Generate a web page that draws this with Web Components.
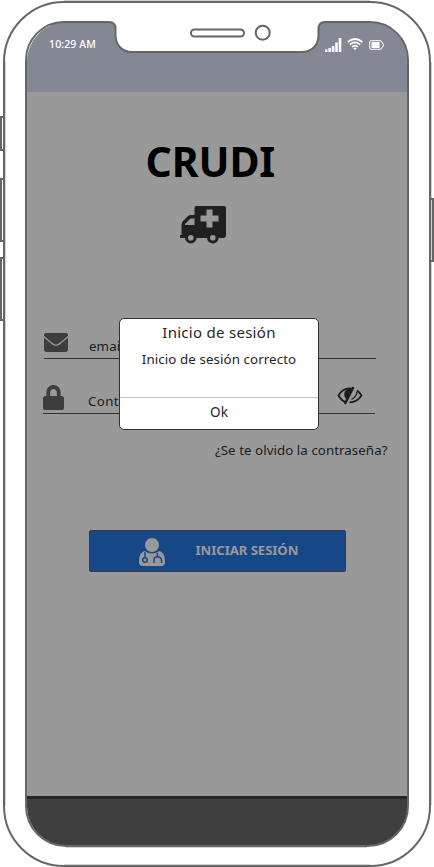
<!DOCTYPE html>
<html lang="es"><head><meta charset="utf-8"><title>CRUDI</title>
<style>html,body{margin:0;background:#fff}body{width:434px;height:867px;overflow:hidden;font-family:"Noto Sans","Open Sans",sans-serif;color:#1c1c1c}</style></head>
<body>
<phone-frame><login-screen></login-screen><message-dialog heading="Inicio de sesión" action="Ok">Inicio de sesión correcto</message-dialog></phone-frame>
<script>
const define=(name,html,setup)=>customElements.define(name,class extends HTMLElement{
 connectedCallback(){ if(this.shadowRoot)return; const t=document.createElement('template'); t.innerHTML=html;
  this.attachShadow({mode:'open'}).append(t.content.cloneNode(true)); if(setup)setup(this,this.shadowRoot);}
});
const icons={
 mail:['0 0 512 384','<path d="M0 52Q0 0 50 0H462Q512 0 512 52V60C440 118 380 164 320 208C270 243 242 243 192 208C132 164 72 118 0 60ZM0 96C65 148 120 190 174 230C232 270 280 270 338 230C392 190 447 148 512 96V334Q512 384 462 384H50Q0 384 0 334Z"/>'],
 lock:['0 0 448 512','<path fill-rule="evenodd" d="M400 224h-24v-72C376 68 308 0 224 0S72 68 72 152v72H48c-26 0-48 21-48 48v192c0 27 22 48 48 48h352c27 0 48-21 48-48V272c0-27-21-48-48-48zm-104 0H152v-72c0-40 32-72 72-72s72 32 72 72z"/>'],
 van:['0 0 46 38','<path fill-rule="evenodd" d="M16 0H44Q46 0 46 2V29Q46 32 43 32H38.5A6 6 0 0 0 27 32H16.5A6 6 0 0 0 5 32H0V29H1.5V19Q1.5 17 3 15L8 10Q9.500 9 11 9H14.500V2Q14.500 0 16 0ZM26.500 3.500V9.500H20.500V15.500H26.500V21.500H32.500V15.500H38.500V9.500H32.500V3.500ZM10.500 12.500L5 18V19H14.500V12.500Z"/><g fill="none" stroke="currentColor" stroke-width="3"><circle cx="10.800" cy="31.700" r="4.300"/><circle cx="32.800" cy="31.700" r="4.300"/></g>'],
 eye:['0 0 26 20','<g fill="none" stroke="currentColor" stroke-width="1.800"><path d="M14.500 2.500C8 1.500 4 5 1.500 9.500C3.500 13 5.500 15 8.500 16M20 4.500Q23 6.500 24.500 9.500C22 13.500 18 16.300 12.500 16.300"/><path d="M16.500 1L7.800 18" stroke-width="2.400"/><path d="M20 5.500Q20 10.500 14.500 13.500" stroke-width="1.300"/></g><path d="M14.500 3C9 2 6.500 6 7.500 10Q8 12.500 9.700 13.300L14 5Z"/>'],
 doctor:['0 0 26 28','<circle cx="13" cy="7" r="7"/><path d="M5.500 13Q13 18 20.500 13C24.500 14.500 26 18 26 24Q26 28 22 28H4Q0 28 0 24C0 18 1.500 14.500 5.500 13Z"/><g fill="none" stroke="#184788" stroke-width="1.500"><path d="M6 14V19.500M18.500 15V18.500M15 25V22Q15 18.800 18.500 18.800T22.500 22V25"/><circle cx="6" cy="22" r="2.300"/></g>'],
 signal:['0 0 17 14','<path d="M0 11.500h2.500v2.500H0zM3.400 10h2.500v4H3.400zM6.800 8h2.500v6H6.800zM10.200 4.500h2.500v9.500h-2.500zM13.700 0h2.600v14h-2.600z"/>'],
 wifi:['0 0 16 12','<g fill="none" stroke="currentColor" stroke-width="1.700"><path d="M.600 4.200Q8-2.200 15.400 4.200M2.900 6.600Q8 2.200 13.100 6.600M5.100 8.900Q8 6.200 10.900 8.900"/></g><path d="M6.200 10.200Q8 8.700 9.800 10.200L8 12Z"/>'],
 battery:['0 0 15 10','<path d="M2 .700H11Q12.700.700 12.800 2.300Q14.300 2.500 14.300 5T12.800 7.700Q12.700 9.300 11 9.300H2Q.700 9.300.700 8V2Q.700.700 2 .700Z" fill="none" stroke="currentColor"/><path d="M2.500 2h8v6h-8z"/>']
};
define('ui-icon','<style>:host{display:block;flex:none}svg{display:block;width:100%;height:100%;fill:currentColor}</style><svg preserveAspectRatio="none"></svg>',(h,r)=>{
 const s=r.querySelector('svg'),i=icons[h.getAttribute('name')];s.setAttribute('viewBox',i[0]);s.innerHTML=i[1];});
define('status-bar',`<style>:host{display:flex;box-sizing:border-box;height:70px;padding:12px 24px 0 22px;background:#838894;color:#fff;font:500 10.5px/20px "Noto Sans",sans-serif}
span{flex:1;letter-spacing:.12px}ui-icon{margin-top:4px}.s{width:17px;height:14px}.w{width:16px;height:12px;margin:4px 6px 0 5px}.b{width:15px;height:10px;margin-top:6px}</style>
<span>10:29 AM</span><ui-icon class="s" name="signal"></ui-icon><ui-icon class="w" name="wifi"></ui-icon><ui-icon class="b" name="battery"></ui-icon>`);
define('input-row',`<style>:host{display:flex;box-sizing:border-box;align-items:flex-start;border-bottom:1px solid #333;font-size:13.3px;line-height:20px}
.i{width:var(--iw);height:var(--ih);color:#3d3d3d}span{margin:var(--ty) 0 0 var(--gap);flex:1;letter-spacing:var(--ls,.1px)}</style><div class="i"></div><span><slot></slot></span><slot name="end"></slot>`,(h,r)=>{
 const n=document.createElement('ui-icon');n.className='i';n.setAttribute('name',h.getAttribute('icon'));r.querySelector('.i').replaceWith(n);});
define('action-button',`<style>:host{display:flex;box-sizing:border-box;width:257px;height:42px;border:1px solid #353c46;border-radius:2px;background:#184788;color:#999;padding:7px 0 0 49px;font-weight:700;font-size:13.2px;line-height:20px}
ui-icon{width:26px;height:28px}span{margin:2px 0 0 30.500px;white-space:nowrap;letter-spacing:-.08px}</style><ui-icon name="doctor"></ui-icon><span><slot></slot></span>`);
define('login-screen',`<style>:host{display:flex;flex-direction:column;height:100%;background:#999}
h1{margin:39px 0 0 118.500px;font-size:41px;line-height:60px;color:#000;letter-spacing:-.1px}
.van{width:46px;height:38px;margin:15px 0 0 153px;color:#202020}
.email{width:332px;height:26px;margin:89px 0 0 17px;--iw:24px;--ih:19px;--ty:3px;--gap:21px}
.pass{width:332px;height:29px;margin:26px 0 0 16px;--iw:21px;--ih:25px;--ty:6px;--gap:24px;--ls:.4px}
.eye{width:26px;height:20px;margin:1px 12px 0 0}
p{margin:26px 20.500px 0 0;text-align:right;font-size:13.3px;line-height:20px;letter-spacing:.06px;white-space:nowrap}
action-button{margin:70px 0 0 62px}footer{margin-top:auto;height:47px;border-top:3px solid #262626;background:#3f3f3f}</style>
<status-bar></status-bar><h1>CRUDI</h1><ui-icon class="van" name="van"></ui-icon>
<input-row class="email" icon="mail">email</input-row><input-row class="pass" icon="lock">Contraseña<ui-icon slot="end" class="eye" name="eye"></ui-icon></input-row>
<p>¿Se te olvido la contraseña?</p><action-button>INICIAR SESIÓN</action-button><footer></footer>`);
define('message-dialog',`<style>:host{position:absolute;z-index:1;left:119px;top:318px;width:200px;height:112px;box-sizing:border-box;display:flex;flex-direction:column;border:1px solid #333;border-radius:5px;background:#fff;text-align:center;line-height:20px;color:#262626;white-space:nowrap}
h2{margin:3px 0 0;font-size:15px;font-weight:400;letter-spacing:.28px}p{margin:7px 0 0;font-size:13.3px;letter-spacing:.1px}footer{margin-top:auto;height:31px;border-top:1px solid #c5c5c5;font-size:13.6px;line-height:28px}</style><h2></h2><p><slot></slot></p><footer></footer>`,(h,r)=>{
 r.querySelector('h2').textContent=h.getAttribute('heading');r.querySelector('footer').textContent=h.getAttribute('action');});
define('phone-frame',`<style>:host{display:block;position:relative;box-sizing:border-box;width:434px;height:867px;padding:22px 26px 21px 27px}
.screen{height:824px;width:381px;border-radius:40px;overflow:hidden}svg{position:absolute;left:0;top:0;pointer-events:none}</style>
<div class="screen"><slot></slot></div>
<svg width="434" height="867" fill="none" stroke="#666" stroke-width="2">
<path d="M109 22Q115.500 22 115.500 29V35C115.500 45 122 52 132 52H302C312 52 318.500 45 318.500 35V29Q318.500 22 325 22V8H109Z" fill="#fff" stroke="none"/>
<path d="M64 22H109Q115.500 22 115.500 29V35C115.500 45 122 52 132 52H302C312 52 318.500 45 318.500 35V29Q318.500 22 325 22H370A38 38 0 0 1 408 60V806A40 40 0 0 1 368 846H66A40 40 0 0 1 26 806V60A38 38 0 0 1 64 22Z"/>
<path d="M5.500 62V806M431.500 62V805M64 .500H370M66 847.500H367M64 864.500H370" stroke="#d4d4d4" stroke-width="1"/>
<path d="M64 2H370A60 60 0 0 1 430 62V806A60 60 0 0 1 370 866H64A60 60 0 0 1 4 806V62A60 60 0 0 1 64 2Z"/>
<rect x="191" y="29.500" width="53" height="7" rx="3.500"/><circle cx="262.700" cy="32.700" r="7"/>
<path d="M4 117H1V150H4M4 179H1V241H4M4 258H1V320H4M430 199H433V261H430"/>
</svg>`);
</script></body></html>
